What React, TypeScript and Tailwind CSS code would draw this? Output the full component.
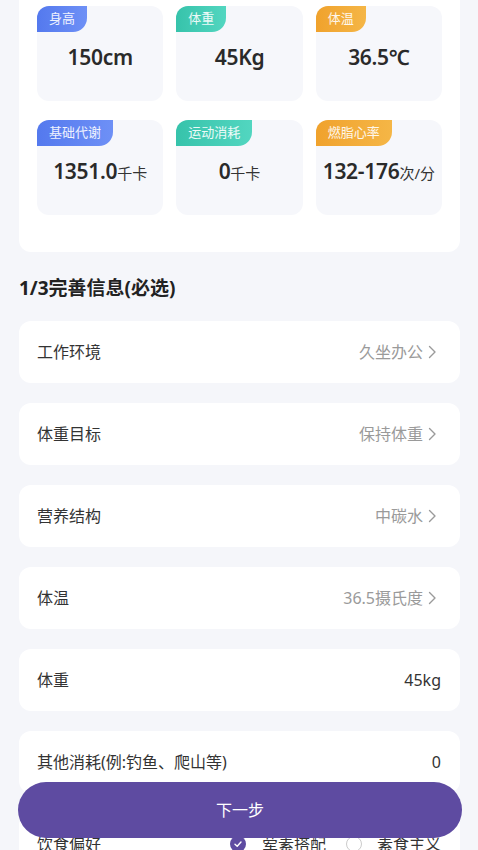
import React from 'react';

const font = { fontFamily: '"Noto Sans", "Noto Sans CJK SC", sans-serif' };

type Stat = { tag: string; value: string; unit?: string; color: string };

const stats: Stat[] = [
  { tag: '身高', value: '150cm', color: 'bg-gradient-to-r from-[#5479ee] to-[#6e90f6]' },
  { tag: '体重', value: '45Kg', color: 'bg-gradient-to-r from-[#36c3ab] to-[#52d6c0]' },
  { tag: '体温', value: '36.5℃', color: 'bg-gradient-to-r from-[#f0a22c] to-[#f5b646]' },
  { tag: '基础代谢', value: '1351.0', unit: '千卡', color: 'bg-gradient-to-r from-[#5479ee] to-[#6e90f6]' },
  { tag: '运动消耗', value: '0', unit: '千卡', color: 'bg-gradient-to-r from-[#36c3ab] to-[#52d6c0]' },
  { tag: '燃脂心率', value: '132-176', unit: '次/分', color: 'bg-gradient-to-r from-[#f0a22c] to-[#f5b646]' },
];

const rows = [
  { label: '工作环境', value: '久坐办公', arrow: true },
  { label: '体重目标', value: '保持体重', arrow: true },
  { label: '营养结构', value: '中碳水', arrow: true },
  { label: '体温', value: '36.5摄氏度', arrow: true },
  { label: '体重', value: '45kg', arrow: false, dark: true },
  { label: '其他消耗(例:钓鱼、爬山等)', value: '0', arrow: false, dark: true },
];

function Chevron() {
  return (
    <svg width="10" height="14" viewBox="0 0 10 14" className="ml-[4px] mr-[4px]">
      <path d="M2.5 1.5 L8 7 L2.5 12.5" fill="none" stroke="#9a9a9a" strokeWidth="1.4" strokeLinecap="round" strokeLinejoin="round" />
    </svg>
  );
}

export default function App() {
  return (
    <div className="min-h-screen bg-[#f5f6fa] px-[19px] pb-[120px]" style={font}>
      {/* stats card */}
      <div className="w-[441px] bg-white rounded-b-[12px] px-[18px] pt-[6px] pb-[37px]">
        <div className="grid grid-cols-3 gap-x-[13px] gap-y-[19px]">
          {stats.map((s) => (
            <div key={s.tag} className="h-[95px] rounded-[12px] bg-[#f6f7fb] flex flex-col">
              <div
                className={`self-start h-[26px] px-[12px] flex items-center text-[13px] text-white/90 rounded-tl-[12px] rounded-br-[14px] ${s.color}`}
              >
                {s.tag}
              </div>
              <div className="mt-[12px] h-[26px] flex items-baseline justify-center text-[#2a2a2a]">
                <span className="text-[21px] font-semibold leading-[26px] tracking-[-0.3px]">{s.value}</span>
                {s.unit && <span className="text-[15px] text-[#333] leading-[26px]">{s.unit}</span>}
              </div>
            </div>
          ))}
        </div>
      </div>

      <div className="mt-[24px] mb-[21px] h-[24px] leading-[24px] text-[19px] font-bold text-[#222]">
        1/3完善信息(必选)
      </div>

      <div className="flex flex-col gap-[20px] w-[441px]">
        {rows.map((r) => (
          <div key={r.label} className="h-[62px] bg-white rounded-[12px] pl-[18px] pr-[19px] flex items-center justify-between">
            <span className="text-[16px] text-[#333]">{r.label}</span>
            <span className="flex items-center">
              <span className={`text-[16px] ${r.dark ? 'text-[#333]' : 'text-[#9a9a9a]'}`}>{r.value}</span>
              {r.arrow && <Chevron />}
            </span>
          </div>
        ))}
        <div className="h-[62px] bg-white rounded-[12px] pl-[18px] pr-[19px] flex items-center justify-between">
          <span className="text-[16px] text-[#333]">饮食偏好</span>
          <span className="flex items-center text-[16px] text-[#333]">
            <span className="w-[16px] h-[16px] rounded-full bg-[#5e4ba1] flex items-center justify-center mr-[16px]">
              <svg width="10" height="10" viewBox="0 0 10 10">
                <path d="M2 5.2 L4.2 7.2 L8 3" fill="none" stroke="#fff" strokeWidth="1.4" strokeLinecap="round" strokeLinejoin="round" />
              </svg>
            </span>
            荤素搭配
            <span className="w-[16px] h-[16px] rounded-full border border-[#ccc] ml-[20px] mr-[15px]" />
            素食主义
          </span>
        </div>
      </div>

      <button className="fixed bottom-[12px] left-[18px] right-[16px] h-[56px] rounded-full bg-[#5e4ba1] text-white text-[16px]" style={font}>
        下一步
      </button>
    </div>
  );
}
